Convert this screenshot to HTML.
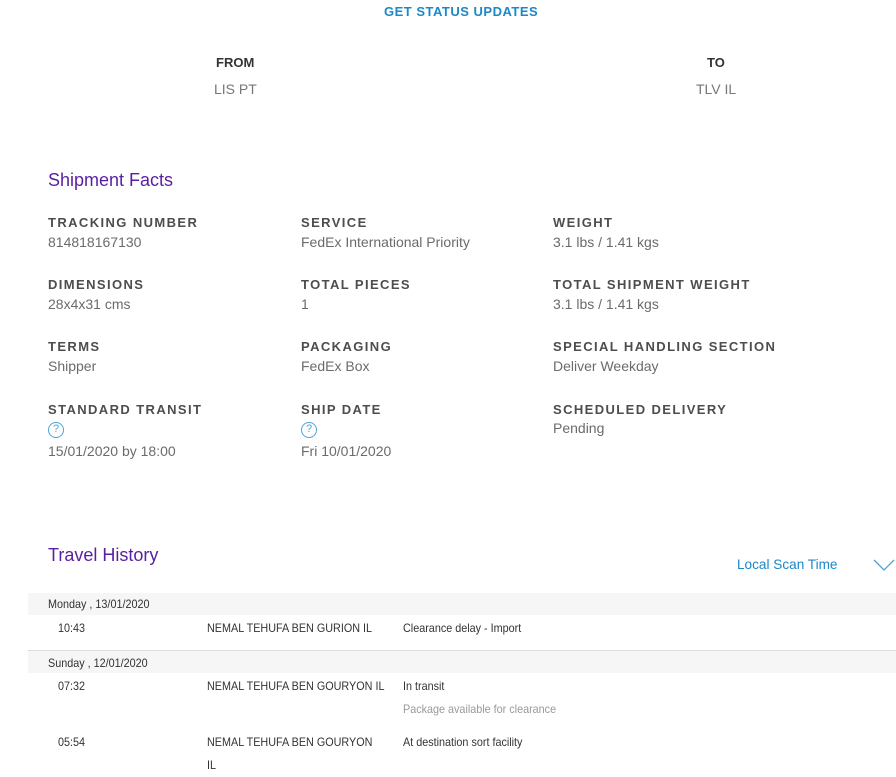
<!DOCTYPE html>
<html><head><meta charset="utf-8"><style>
body{margin:0;width:896px;height:777px;overflow:hidden;background:#fff;font-family:"Liberation Sans",sans-serif;position:relative}
.a{position:absolute;white-space:nowrap}
.l{font-size:13px;font-weight:bold;letter-spacing:1.4px;color:#4d4d4d}
.v{font-size:14px;color:#6b6b6b}
.h{font-size:18px;color:#5a1fa0}
.n{font-size:12px;color:#333;transform:scaleX(0.9);transform-origin:0 0}
.q{width:16px;height:16px;border:1.5px solid #4fa3dc;border-radius:50%;box-sizing:border-box;color:#4fa3dc;font-size:11px;text-align:center;line-height:13px}
</style></head><body>
<div class="a" style="left:384px;top:4px;font-size:13px;font-weight:bold;color:#1a88c9;letter-spacing:0.5px">GET STATUS UPDATES</div>
<div class="a" style="left:216px;top:55px;font-size:13px;font-weight:bold;color:#333">FROM</div>
<div class="a" style="left:214px;top:81px;font-size:14px;color:#777">LIS PT</div>
<div class="a" style="left:707px;top:55px;font-size:13px;font-weight:bold;color:#333">TO</div>
<div class="a" style="left:696px;top:81px;font-size:14px;color:#777">TLV IL</div>
<div class="a h" style="left:48px;top:170px">Shipment Facts</div>

<div class="a l" style="left:48px;top:215px">TRACKING NUMBER</div><div class="a v" style="left:48px;top:234px">814818167130</div>
<div class="a l" style="left:301px;top:215px">SERVICE</div><div class="a v" style="left:301px;top:234px">FedEx International Priority</div>
<div class="a l" style="left:553px;top:215px">WEIGHT</div><div class="a v" style="left:553px;top:234px">3.1 lbs / 1.41 kgs</div>

<div class="a l" style="left:48px;top:277px">DIMENSIONS</div><div class="a v" style="left:48px;top:296px">28x4x31 cms</div>
<div class="a l" style="left:301px;top:277px">TOTAL PIECES</div><div class="a v" style="left:301px;top:296px">1</div>
<div class="a l" style="left:553px;top:277px">TOTAL SHIPMENT WEIGHT</div><div class="a v" style="left:553px;top:296px">3.1 lbs / 1.41 kgs</div>

<div class="a l" style="left:48px;top:339px">TERMS</div><div class="a v" style="left:48px;top:358px">Shipper</div>
<div class="a l" style="left:301px;top:339px">PACKAGING</div><div class="a v" style="left:301px;top:358px">FedEx Box</div>
<div class="a l" style="left:553px;top:339px">SPECIAL HANDLING SECTION</div><div class="a v" style="left:553px;top:358px">Deliver Weekday</div>

<div class="a l" style="left:48px;top:402px">STANDARD TRANSIT</div><div class="a q" style="left:48px;top:422px">?</div><div class="a v" style="left:48px;top:443px">15/01/2020 by 18:00</div>
<div class="a l" style="left:301px;top:402px">SHIP DATE</div><div class="a q" style="left:301px;top:422px">?</div><div class="a v" style="left:301px;top:443px">Fri 10/01/2020</div>
<div class="a l" style="left:553px;top:402px">SCHEDULED DELIVERY</div><div class="a v" style="left:553px;top:420px">Pending</div>

<div class="a h" style="left:48px;top:545px">Travel History</div>
<div class="a" style="left:737px;top:557px;font-size:13.6px;color:#1a88c9">Local Scan Time</div>
<svg class="a" style="left:873px;top:559px" width="22" height="13"><path d="M1 1 L11 11 L21 1" fill="none" stroke="#4fa3dc" stroke-width="1.3"/></svg>

<div class="a" style="left:28px;top:593px;width:868px;height:22px;background:#f6f6f6"></div>
<div class="a n" style="left:48px;top:597px">Monday , 13/01/2020</div>
<div class="a n" style="left:58px;top:621px">10:43</div>
<div class="a n" style="left:207px;top:621px">NEMAL TEHUFA BEN GURION IL</div>
<div class="a n" style="left:403px;top:621px">Clearance delay - Import</div>
<div class="a" style="left:28px;top:650px;width:868px;height:1px;background:#ddd"></div>
<div class="a" style="left:28px;top:651px;width:868px;height:22px;background:#f6f6f6"></div>
<div class="a n" style="left:48px;top:656px">Sunday , 12/01/2020</div>
<div class="a n" style="left:58px;top:679px">07:32</div>
<div class="a n" style="left:207px;top:679px">NEMAL TEHUFA BEN GOURYON IL</div>
<div class="a n" style="left:403px;top:679px">In transit</div>
<div class="a n" style="left:403px;top:702px;color:#999">Package available for clearance</div>
<div class="a n" style="left:58px;top:735px">05:54</div>
<div class="a n" style="left:207px;top:735px">NEMAL TEHUFA BEN GOURYON</div>
<div class="a n" style="left:207px;top:758px">IL</div>
<div class="a n" style="left:403px;top:735px">At destination sort facility</div>
</body></html>
